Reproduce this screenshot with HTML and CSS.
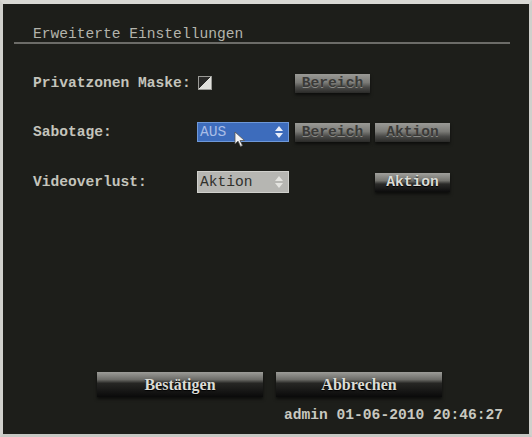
FILE: index.html
```html
<!DOCTYPE html>
<html lang="de">
<head>
    <meta charset="UTF-8">
    <title>Erweiterte Einstellungen</title>
    <link rel="stylesheet" href="styles.css">
</head>
<body>

    <div class="screen">
        <div class="title">Erweiterte Einstellungen</div>

        <div class="form">
            <div class="row">
                <span class="label">Privatzonen Maske:</span>
                <span class="checkbox"></span>
                <button class="btn small disabled">Bereich</button>
                <span></span>
            </div>
            <div class="row">
                <span class="label">Sabotage:</span>
                <div class="select active">
                    <span>AUS</span>
                    <svg class="spin" width="8" height="12" viewBox="0 0 8 12"><path d="M4 0 L8 5 L0 5 Z M0 7 L8 7 L4 12 Z" fill="#e8eefa"/></svg>
                    <!-- mouse pointer -->
                    <svg class="pointer" width="12" height="17" viewBox="0 0 12 17"><path d="M1 1 L1 13 L4 10 L6.5 15.5 L8.5 14.5 L6 9.5 L10.5 9.5 Z" fill="#f4f4f4" stroke="#555" stroke-width="0.8"/></svg>
                </div>
                <button class="btn small disabled">Bereich</button>
                <button class="btn small disabled">Aktion</button>
            </div>
            <div class="row">
                <span class="label">Videoverlust:</span>
                <div class="select plain">
                    <span>Aktion</span>
                    <svg class="spin" width="8" height="12" viewBox="0 0 8 12"><path d="M4 0 L8 5 L0 5 Z M0 7 L8 7 L4 12 Z" fill="#e4e4e0"/></svg>
                </div>
                <span></span>
                <button class="btn small">Aktion</button>
            </div>
        </div>

        <div class="footer">
            <div class="actions">
                <button class="btn big">Bestätigen</button>
                <button class="btn big">Abbrechen</button>
            </div>
            <div class="status">admin 01-06-2010 20:46:27</div>
        </div>
    </div>

</body>
</html>
```

FILE: styles.css
```css
body {
    margin: 0;
    background: #1d1e1a;
    font-family: "Liberation Mono", "DejaVu Sans Mono", monospace;
    font-weight: bold;
    font-size: 14.6px;
    color: #c4c4bc;
}
.screen {
    width: 532px;
    height: 437px;
    box-sizing: border-box;
    border-top: 4px solid #d8d8d4;
    border-left: 3px solid #d0d0cc;
    border-right: 3px solid #d0d0cc;
    border-bottom: 3px solid #c8c8c4;
    background: #1d1e1a;
    display: flex;
    flex-direction: column;
}
.title {
    margin: 0 19px 0 11px;
    padding: 22px 0 0 19px;
    line-height: 16px;
    border-bottom: 2px solid #6c6c68;
    color: #b4b4ac;
    font-weight: normal;
}
.form {
    margin-top: 29px;
    padding-left: 30px;
    display: flex;
    flex-direction: column;
    gap: 29px;
}
.row {
    display: grid;
    grid-template-columns: 164px 98px 80px 76px;
    align-items: center;
    height: 20px;
}
.label {
    line-height: 16px;
}
.checkbox {
    width: 12px;
    height: 12px;
    margin-left: 1px;
    border: 1px solid #9a9a96;
    background: linear-gradient(135deg, #2a2a28 50%, #e0e0dc 50%);
}
.select {
    position: relative;
    width: 92px;
    height: 20px;
    box-sizing: border-box;
    display: flex;
    align-items: center;
    justify-content: space-between;
    padding: 0 5px 0 2px;
}
.select span {
    line-height: 16px;
}
.select.active {
    background: #3d6cbc;
    border: 1px solid #6e98d8;
    color: #a9bde6;
    font-weight: normal;
}
.select.plain {
    height: 22px;
    background: #b6b6b2;
    border: 1px solid #d0d0cc;
    color: #30302c;
    font-weight: normal;
}
.pointer {
    position: absolute;
    left: 36px;
    top: 8px;
}
.btn {
    font-family: inherit;
    font-weight: bold;
    font-size: 14.6px;
    border: none;
    padding: 0;
    color: #dcdcd6;
    text-shadow: 0 1px 1px #000;
    background: linear-gradient(#a0a09c 0%, #74746f 40%, #2a2a28 58%, #0c0c0c 100%);
    box-shadow: 0 2px 3px rgba(0, 0, 0, 0.6);
}
.btn.small {
    width: 75px;
    height: 19px;
    line-height: 19px;
}
.btn.disabled {
    color: #3a3a38;
    text-shadow: 0 1px 0 #8a8a86;
    background: linear-gradient(#9a9a96 0%, #7a7a76 45%, #4a4a48 70%, #2a2a28 100%);
}
.footer {
    margin-top: auto;
    padding: 0 26px 11px 94px;
}
.actions {
    display: flex;
    gap: 13px;
}
.btn.big {
    width: 166px;
    height: 25px;
    line-height: 25px;
    font-family: "Liberation Serif", serif;
    font-size: 16px;
    background: linear-gradient(#9c9c98 0%, #6c6c68 30%, #262624 45%, #0a0a0a 100%);
}
.status {
    margin-top: 10px;
    line-height: 16px;
    text-align: right;
    color: #c8c8c0;
}
```
